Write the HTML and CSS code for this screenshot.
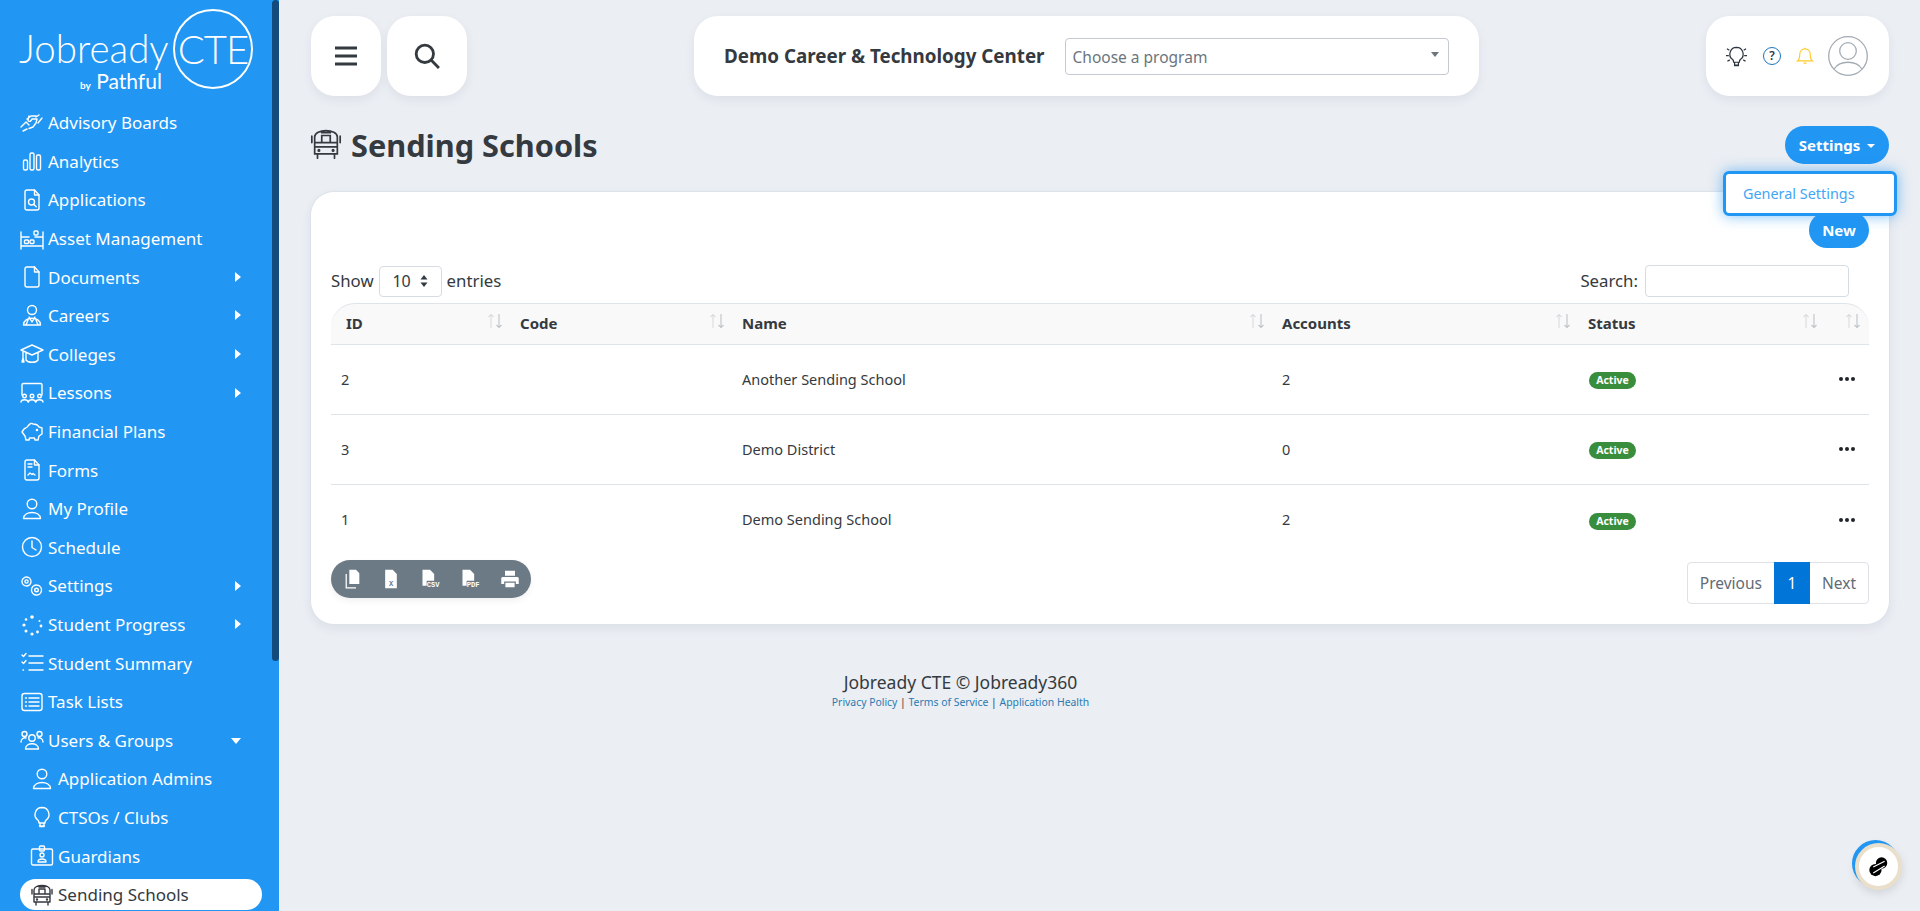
FILE: index.html
```html
<!DOCTYPE html>
<html lang="en">
<head>
  <meta charset="UTF-8">
  <meta name="viewport" content="width=device-width, initial-scale=1.0">
  <title>Sending Schools</title>
  <link rel="stylesheet" href="styles.css">
</head>
<body>
  <svg class="sprite" xmlns="http://www.w3.org/2000/svg">
    <symbol id="i-hands" viewBox="0 0 24 24"><path d="M1 16l5-5M7 8l4-3 5 0M9 5l-1 4c-.3 1.500 2 2 3 .5l1-1.500h5l-1 4-3 4-4 1.500M3 20l4-2M16 6l3-2M18 12l4-5M6 11l3 3"/></symbol>
    <symbol id="i-bars" viewBox="0 0 24 24"><rect x="3.500" y="11" width="4" height="10" rx="1.500"/><rect x="10" y="4" width="4" height="17" rx="1.500"/><rect x="16.500" y="6" width="4" height="15" rx="1.500"/></symbol>
    <symbol id="i-filesearch" viewBox="0 0 24 24"><path d="M14.500 2H7a2 2 0 0 0-2 2v16a2 2 0 0 0 2 2h10a2 2 0 0 0 2-2V7z"/><path d="M14.500 2v5H19"/><circle cx="11.500" cy="14" r="3"/><path d="M13.700 16.200l2.500 2.500"/></symbol>
    <symbol id="i-shelf" viewBox="0 0 24 24"><path d="M1 5v17M23 5v17M1 10h8M15 10h8M1 19h22"/><rect x="14" y="4" width="4" height="4" rx="1"/><rect x="4.500" y="13" width="4" height="3.500" rx="1"/><rect x="10" y="13" width="4" height="3.500" rx="1"/></symbol>
    <symbol id="i-file" viewBox="0 0 24 24"><path d="M14.500 2H7a2 2 0 0 0-2 2v16a2 2 0 0 0 2 2h10a2 2 0 0 0 2-2V7z"/><path d="M14.500 2v5H19"/></symbol>
    <symbol id="i-career" viewBox="0 0 24 24"><circle cx="12" cy="6" r="4.500"/><path d="M3.500 21c0-9 17-9 17 0zM9 13l3 5 3-5M6 21l2-5M18 21l-2-5"/></symbol>
    <symbol id="i-grad" viewBox="0 0 24 24"><path d="M1 8l11-5 11 5-11 5zM6 11v7c2 3 10 3 12 0v-7M3 9v7M2 20l1-4 1 4z"/></symbol>
    <symbol id="i-lesson" viewBox="0 0 24 24"><path d="M2 14V4a1.500 1.500 0 0 1 1.500-1.500h17A1.500 1.500 0 0 1 22 4v10"/><circle cx="4.500" cy="15" r="1.800"/><circle cx="12" cy="15" r="1.800"/><circle cx="19.500" cy="15" r="1.800"/><path d="M1 21c0-3 7-3 7 0M8.500 21c0-3 7-3 7 0M16 21c0-3 7-3 7 0"/></symbol>
    <symbol id="i-piggy" viewBox="0 0 24 24"><path d="M8 6c2-3 4-3 5-2 3 0 5 1 6 3l3 1v6l-3 2-1 4h-3l-.5-2h-5l-.5 2H6l-1-4-3-4 2-3c1-1 3-1 4-3z"/><circle cx="17" cy="10" r=".6"/></symbol>
    <symbol id="i-form" viewBox="0 0 24 24"><path d="M14.500 2H7a2 2 0 0 0-2 2v16a2 2 0 0 0 2 2h10a2 2 0 0 0 2-2V7z"/><path d="M14.500 2v5H19M8 6h4M8 9h4M8 17l2-2 2 1.500 1-1 2 1.500"/></symbol>
    <symbol id="i-user" viewBox="0 0 24 24"><circle cx="12" cy="7" r="4.800"/><path d="M3.500 21.500c0-8 17-8 17 0z"/></symbol>
    <symbol id="i-clock" viewBox="0 0 24 24"><circle cx="12" cy="12" r="9.500"/><path d="M12 6v6.500l4 2.500"/></symbol>
    <symbol id="i-gears" viewBox="0 0 24 24"><circle cx="6.500" cy="7.500" r="4.500" stroke-dasharray="3 1"/><circle cx="6.500" cy="7.500" r="1.600"/><circle cx="16.500" cy="16" r="5" stroke-dasharray="3 1"/><circle cx="16.500" cy="16" r="1.800"/></symbol>
    <symbol id="i-dots" viewBox="0 0 24 24"><g class="solid"><circle cx="12" cy="4" r="1.800"/><circle cx="19.500" cy="8" r="1"/><circle cx="21" cy="13" r="1.400"/><circle cx="17.500" cy="19" r="1.400"/><circle cx="12" cy="21" r="1.600"/><circle cx="6" cy="18" r="1.500"/><circle cx="4" cy="12" r="1.600"/><circle cx="6" cy="6.500" r="1.300"/></g></symbol>
    <symbol id="i-check" viewBox="0 0 24 24"><path d="M9 5h14M9 12h14M9 19h14M2 4l1.500 1.500L6 2.500M2 11l1.500 1.500L6 9.500M3 19h.5"/></symbol>
    <symbol id="i-list" viewBox="0 0 24 24"><rect x="2" y="3.500" width="20" height="17" rx="2.500"/><path d="M5.500 8h1M9 8h10M5.500 12h1M9 12h10M5.500 16h1M9 16h10"/></symbol>
    <symbol id="i-users" viewBox="0 0 24 24"><circle cx="12" cy="10" r="3.200"/><circle cx="4.500" cy="6" r="2.500"/><circle cx="19.500" cy="6" r="2.500"/><path d="M5.500 21c0-7 13-7 13 0zM1 14c0-3 3-5 5-4M23 14c0-3-3-5-5-4"/></symbol>
    <symbol id="i-bulb" viewBox="0 0 24 24"><path d="M12 2.500a7 7 0 0 0-4 12.700c.8.7 1 1.500 1 2.800h6c0-1.300.2-2.100 1-2.800A7 7 0 0 0 12 2.500zM9.500 21h5M10 18v3.500h4V18"/></symbol>
    <symbol id="i-badge" viewBox="0 0 24 24"><rect x="1.500" y="5" width="21" height="16" rx="1.500"/><rect x="9.500" y="2" width="5" height="5" rx="1"/><circle cx="12" cy="11" r="2"/><path d="M8 18c0-4 8-4 8 0z"/></symbol>
    <symbol id="i-bus" viewBox="0 0 24 24"><path d="M4 19V7c0-6 16-6 16 0v12zM4 11h16M9 11V6h6v5M9 4h6M6 19v3M18 19v3M4 14h16M2 6.500V11M22 6.500V11"/><circle cx="7" cy="16.500" r=".5"/><circle cx="17" cy="16.500" r=".5"/></symbol>
    <symbol id="i-sort" viewBox="0 0 16 16"><path class="sort-up" d="M4 15V1.500M1.500 4L4 1.500 6.500 4"/><path class="sort-down" d="M12 1v13.500M9.500 12l2.500 2.500 2.500-2.500"/></symbol>
  </svg>

  <div class="layout">
    <aside class="sidebar">
      <div class="scroll-thumb"></div>
      <div class="logo">
        <div class="logo-left">
          <span class="logo-word">Jobready</span>
          <span class="logo-by"><small>by</small> Pathful</span>
        </div>
        <div class="logo-circle">CTE</div>
      </div>
      <nav class="side-nav">
        <a class="nav-item"><svg class="ico"><use href="#i-hands"/></svg>Advisory Boards</a>
        <a class="nav-item"><svg class="ico"><use href="#i-bars"/></svg>Analytics</a>
        <a class="nav-item"><svg class="ico"><use href="#i-filesearch"/></svg>Applications</a>
        <a class="nav-item"><svg class="ico"><use href="#i-shelf"/></svg>Asset Management</a>
        <a class="nav-item has-sub"><svg class="ico"><use href="#i-file"/></svg>Documents</a>
        <a class="nav-item has-sub"><svg class="ico"><use href="#i-career"/></svg>Careers</a>
        <a class="nav-item has-sub"><svg class="ico"><use href="#i-grad"/></svg>Colleges</a>
        <a class="nav-item has-sub"><svg class="ico"><use href="#i-lesson"/></svg>Lessons</a>
        <a class="nav-item"><svg class="ico"><use href="#i-piggy"/></svg>Financial Plans</a>
        <a class="nav-item"><svg class="ico"><use href="#i-form"/></svg>Forms</a>
        <a class="nav-item"><svg class="ico"><use href="#i-user"/></svg>My Profile</a>
        <a class="nav-item"><svg class="ico"><use href="#i-clock"/></svg>Schedule</a>
        <a class="nav-item has-sub"><svg class="ico"><use href="#i-gears"/></svg>Settings</a>
        <a class="nav-item has-sub"><svg class="ico"><use href="#i-dots"/></svg>Student Progress</a>
        <a class="nav-item"><svg class="ico"><use href="#i-check"/></svg>Student Summary</a>
        <a class="nav-item"><svg class="ico"><use href="#i-list"/></svg>Task Lists</a>
        <a class="nav-item has-sub open"><svg class="ico"><use href="#i-users"/></svg>Users &amp; Groups</a>
        <a class="nav-item sub"><svg class="ico"><use href="#i-user"/></svg>Application Admins</a>
        <a class="nav-item sub"><svg class="ico"><use href="#i-bulb"/></svg>CTSOs / Clubs</a>
        <a class="nav-item sub"><svg class="ico"><use href="#i-badge"/></svg>Guardians</a>
        <a class="nav-item sub active"><svg class="ico"><use href="#i-bus"/></svg>Sending Schools</a>
      </nav>
    </aside>

    <main class="content">
      <header class="topbar">
        <div class="top-group">
          <button class="top-btn">
            <svg class="top-ico" viewBox="0 0 24 24"><path d="M1 4h22M1 12h22M1 20h22" class="thick"/></svg>
          </button>
          <button class="top-btn">
            <svg class="top-ico search-ico" viewBox="0 0 24 24"><circle cx="10" cy="10" r="8"/><path d="M16 16l7 7"/></svg>
          </button>
        </div>
        <div class="org-card">
          <span class="org-name">Demo Career &amp; Technology Center</span>
          <div class="program-select">Choose a program<span class="caret-grey"></span></div>
        </div>
        <div class="user-card">
          <svg class="bulb" viewBox="0 0 24 24"><use href="#i-bulb"/><path d="M2 4l2.500 1.500M1 11h3M2.500 17l2.500-1.500M22 4l-2.500 1.500M23 11h-3M21.500 17L19 15.500"/></svg>
          <span class="help">?</span>
          <svg class="bell" viewBox="0 0 24 24"><path d="M12 2.500a7 7 0 0 0-7 7c0 6-1 7.500-3 9h20c-2-1.500-3-3-3-9a7 7 0 0 0-7-7zM10 21.500h4M12 1v1.500"/></svg>
          <svg class="avatar" viewBox="0 0 40 40"><circle cx="20" cy="20" r="19.300"/><circle cx="20" cy="15" r="8.300"/><path d="M6 33c6-9 22-9 28 0"/></svg>
        </div>
      </header>

      <div class="title-row">
        <h1 class="page-title"><svg class="title-ico"><use href="#i-bus"/></svg>Sending Schools</h1>
        <button class="pill-btn settings-btn">Settings<span class="caret-white"></span></button>
        <div class="drop-menu"><a>General Settings</a></div>
      </div>

      <section class="card">
        <div class="card-actions"><button class="pill-btn new-btn">New</button></div>
        <div class="table-tools">
          <div class="show-entries">Show <div class="len-select">10<svg viewBox="0 0 8 12"><path d="M4 0l3.500 4.500h-7zM4 12L.5 7.500h7z"/></svg></div> entries</div>
          <label class="search-box">Search: <input type="text"></label>
        </div>
        <table class="data-table">
          <colgroup>
            <col class="c-id"><col class="c-code"><col class="c-name"><col class="c-acc"><col class="c-status"><col class="c-act">
          </colgroup>
          <thead>
            <tr>
              <th><div class="th-in">ID<svg class="sort"><use href="#i-sort"/></svg></div></th>
              <th><div class="th-in">Code<svg class="sort"><use href="#i-sort"/></svg></div></th>
              <th><div class="th-in">Name<svg class="sort"><use href="#i-sort"/></svg></div></th>
              <th><div class="th-in">Accounts<svg class="sort"><use href="#i-sort"/></svg></div></th>
              <th><div class="th-in">Status<svg class="sort"><use href="#i-sort"/></svg></div></th>
              <th><div class="th-in"><span></span><svg class="sort"><use href="#i-sort"/></svg></div></th>
            </tr>
          </thead>
          <tbody>
            <tr>
              <td>2</td><td></td><td>Another Sending School</td><td>2</td>
              <td><span class="badge">Active</span></td><td class="dots-cell"><span class="dots"><i></i><i></i><i></i></span></td>
            </tr>
            <tr>
              <td>3</td><td></td><td>Demo District</td><td>0</td>
              <td><span class="badge">Active</span></td><td class="dots-cell"><span class="dots"><i></i><i></i><i></i></span></td>
            </tr>
            <tr>
              <td>1</td><td></td><td>Demo Sending School</td><td>2</td>
              <td><span class="badge">Active</span></td><td class="dots-cell"><span class="dots"><i></i><i></i><i></i></span></td>
            </tr>
          </tbody>
        </table>
        <div class="table-foot">
          <div class="export-group">
            <button>
              <svg viewBox="0 0 24 24"><path class="solid" d="M10 1h8l4 4v13H10zM7 6v16h11v1.500H5.500V6z"/></svg>
            </button>
            <button>
              <svg viewBox="0 0 24 24"><path class="solid" d="M5 1h9l5 5v17H5z"/><text x="12" y="20" class="file-tag">X</text></svg>
            </button>
            <button>
              <svg viewBox="0 0 24 24"><path class="solid" d="M3 1h9l5 5v8H8v6H3z"/><text x="8" y="22" class="file-tag on-dark">CSV</text></svg>
            </button>
            <button>
              <svg viewBox="0 0 24 24"><path class="solid" d="M3 1h9l5 5v8H8v6H3z"/><text x="8" y="22" class="file-tag on-dark">PDF</text></svg>
            </button>
            <button>
              <svg viewBox="0 0 24 24"><path class="solid" d="M6 2h12v6H6zM3 9.500h18a2 2 0 0 1 1.500 2V18H19v-3H5v3H1.500v-6.500a2 2 0 0 1 1.500-2zM6.500 16.500h11V22h-11z"/></svg>
            </button>
          </div>
          <div class="pager">
            <a>Previous</a><a class="current">1</a><a>Next</a>
          </div>
        </div>
      </section>

      <footer class="page-foot">
        <div class="foot-main">Jobready CTE © Jobready360</div>
        <div class="foot-links"><a>Privacy Policy</a> | <a>Terms of Service</a> | <a>Application Health</a></div>
      </footer>
    </main>
  </div>

  <div class="chat-widget">
    <svg viewBox="0 0 24 24"><circle cx="15.500" cy="8" r="6.500"/><circle cx="8.500" cy="16" r="7"/><path class="slash" d="M6 12.500L19 6M6 19.500l13-8"/></svg>
  </div>
</body>
</html>
```
FILE: styles.css
```css
* {
  box-sizing: border-box;
}

html, body {
  margin: 0;
  height: 100%;
  overflow: hidden;
}

body {
  background: #ebeef3;
  color: #343a40;
  font-family: "Noto Sans", "Open Sans", sans-serif;
  font-size: 15px;
}

.sprite {
  display: none;
}

.layout {
  display: flex;
  height: 911px;
}

/* sidebar */
.sidebar {
  width: 279px;
  flex: none;
  background: #2196f3;
  color: #fff;
  position: relative;
  overflow: hidden;
}

.scroll-thumb {
  position: absolute;
  top: 0;
  right: 0;
  width: 7px;
  height: 661px;
  background: #134b7d;
  border-radius: 4px;
}

.logo {
  display: flex;
  height: 103.500px;
  padding: 9px 0 0 19px;
}

.logo-left {
  width: 154px;
  display: flex;
  flex-direction: column;
  padding-top: 19px;
}

.logo-word {
  font-family: "Lato", sans-serif;
  font-weight: 300;
  font-size: 38.500px;
  line-height: 40px;
}

.logo-by {
  font-family: "Lato", sans-serif;
  font-size: 21px;
  line-height: 20px;
  margin: 3px 0 0 61px;
  white-space: nowrap;
}

.logo-by small {
  font-size: 10px;
  font-weight: 700;
}

.logo-circle {
  width: 80px;
  height: 80px;
  border: 2.500px solid #fff;
  border-radius: 50%;
  display: flex;
  align-items: center;
  justify-content: center;
  font-family: "Lato", sans-serif;
  font-weight: 300;
  font-size: 40px;
  letter-spacing: -1px;
}

.nav-item {
  display: flex;
  align-items: center;
  height: 38.600px;
  padding-left: 20px;
  font-size: 17px;
  color: #fff;
  position: relative;
  white-space: nowrap;
}

.ico {
  width: 24px;
  height: 24px;
  margin-right: 4px;
  flex: none;
  fill: none;
  stroke: currentColor;
  stroke-width: 1.400;
  stroke-linecap: round;
  stroke-linejoin: round;
}

.solid {
  fill: currentColor;
  stroke: none;
}

.has-sub::after {
  content: "";
  position: absolute;
  left: 235px;
  top: 14px;
  border-left: 6px solid #fff;
  border-top: 5px solid transparent;
  border-bottom: 5px solid transparent;
}

.has-sub.open::after {
  left: 231px;
  top: 17px;
  border-top: 6px solid #fff;
  border-left: 5px solid transparent;
  border-right: 5px solid transparent;
  border-bottom: 0;
}

.sub {
  padding-left: 30px;
}

.sub.active {
  color: #343a40;
  height: 31px;
  margin: 4px 17px 0 20px;
  padding-left: 10px;
  background: #fff;
  border-radius: 16px;
}

/* main */
.content {
  flex: 1;
  min-width: 0;
  padding: 16px 31px 0 32px;
  position: relative;
}

.topbar {
  display: flex;
  justify-content: space-between;
  height: 80px;
}

.top-group {
  display: flex;
  gap: 6px;
}

.top-btn, .org-card, .user-card {
  background: #fff;
  border: 0;
  border-radius: 24px;
  box-shadow: 0 4px 10px rgba(60, 80, 110, 0.08);
}

.top-btn {
  width: 80px;
  padding: 0;
  display: flex;
  align-items: center;
  justify-content: center;
}

.top-btn:first-child {
  width: 70px;
}

.top-ico {
  width: 24px;
  height: 24px;
  fill: none;
  stroke: #343a40;
  stroke-width: 2.600;
}

.top-ico .thick {
  stroke-width: 3;
}

.search-ico {
  width: 26px;
  height: 26px;
}

.org-card {
  width: 785px;
  display: flex;
  align-items: center;
  padding: 0 30px;
}

.org-name {
  font-weight: 700;
  font-size: 18.800px;
  margin-right: 20px;
  white-space: nowrap;
}

.program-select {
  flex: 1;
  height: 37px;
  border: 1px solid #c4cad1;
  border-radius: 4px;
  display: flex;
  align-items: center;
  justify-content: space-between;
  padding: 1px 9px 0 7px;
  font-size: 15.500px;
  color: #6c757d;
}

.caret-grey {
  border-top: 5px solid #6c757d;
  border-left: 4px solid transparent;
  border-right: 4px solid transparent;
  margin-top: -4px;
}

.user-card {
  width: 183px;
  display: flex;
  align-items: center;
  padding-left: 19px;
}

.bulb {
  width: 23px;
  height: 23px;
  fill: none;
  stroke: #2d3540;
  stroke-width: 1.300;
  margin-right: 15px;
}

.help {
  width: 18px;
  height: 18px;
  border: 1.500px solid #1976bd;
  border-radius: 50%;
  color: #2d3540;
  font-size: 12px;
  font-weight: 600;
  line-height: 15px;
  text-align: center;
  margin-right: 15px;
}

.bell {
  width: 18px;
  height: 20px;
  fill: none;
  stroke: #ffca28;
  stroke-width: 1.500;
  margin-right: 14px;
}

.avatar {
  width: 40px;
  height: 40px;
  fill: none;
  stroke: #a3abb3;
  stroke-width: 1.300;
}

.title-row {
  display: flex;
  justify-content: space-between;
  align-items: center;
  height: 38px;
  margin-top: 30px;
  position: relative;
  z-index: 2;
}

.page-title {
  margin: 0;
  display: flex;
  align-items: center;
  font-size: 30.700px;
  font-weight: 700;
  color: #343a40;
}

.title-ico {
  width: 34px;
  height: 34px;
  margin: -2px 8px 0 -2px;
  fill: none;
  stroke: #343a40;
  stroke-width: 1.200;
  stroke-linecap: round;
}

.pill-btn {
  background: #2196f3;
  color: #fff;
  border: 0;
  border-radius: 19px;
  font-family: inherit;
  font-weight: 700;
  font-size: 15px;
}

.settings-btn {
  width: 104px;
  height: 38px;
  display: flex;
  align-items: center;
  justify-content: center;
  gap: 7px;
}

.caret-white {
  border-top: 4px solid #fff;
  border-left: 4px solid transparent;
  border-right: 4px solid transparent;
  margin-top: 2px;
}

.drop-menu {
  position: absolute;
  top: 45px;
  right: -8px;
  width: 174px;
  height: 45px;
  background: #fff;
  border: 3px solid #2196f3;
  border-radius: 6px;
  box-shadow: 0 0 14px rgba(33, 150, 243, 0.6);
  display: flex;
  align-items: center;
  padding-left: 17px;
  color: #42a5f5;
  font-size: 14.400px;
}

.card {
  background: #fff;
  border: 1px solid #dde3ea;
  border-radius: 24px;
  box-shadow: 0 4px 10px rgba(60, 80, 110, 0.08);
  margin: 27px -1px 0;
  height: 434px;
  padding: 20px 20px 0;
}

.card-actions {
  display: flex;
  justify-content: flex-end;
  height: 36px;
}

.new-btn {
  width: 60px;
  height: 36px;
}

.table-tools {
  display: flex;
  justify-content: space-between;
  align-items: center;
  margin-top: 17px;
  height: 32px;
  font-size: 16.800px;
  line-height: 1;
}

.show-entries {
  display: flex;
  align-items: center;
  gap: 5px;
}

.len-select {
  width: 63px;
  height: 31px;
  border: 1px solid #d6dce3;
  border-radius: 4px;
  display: flex;
  align-items: center;
  justify-content: center;
  gap: 9px;
  font-size: 16px;
}

.len-select svg {
  width: 8px;
  height: 12px;
  fill: #343a40;
}

.search-box {
  display: flex;
  align-items: center;
  gap: 7px;
  margin-right: 20px;
}

.search-box input {
  width: 204px;
  height: 32px;
  border: 1px solid #d6dce3;
  border-radius: 4px;
  outline: 0;
}

.data-table {
  width: 1538px;
  table-layout: fixed;
  border-collapse: separate;
  border-spacing: 0;
  margin-top: 6px;
}

.c-id { width: 179px; }
.c-code { width: 222px; }
.c-name { width: 540px; }
.c-acc { width: 306px; }
.c-status { width: 247px; }
.c-act { width: 44px; }

.data-table th {
  height: 42px;
  padding: 0 7px 2px 10px;
  background: #f9f9f9;
  border-top: 1px solid #dee4ea;
  border-bottom: 1px solid #dee4ea;
  font-size: 15px;
  font-weight: 700;
  text-align: left;
}

.data-table th:first-child {
  border-top-left-radius: 24px;
  padding-left: 15px;
}

.data-table th:last-child {
  border-top-right-radius: 24px;
  padding-right: 8px;
  padding-left: 0;
}

.th-in {
  display: flex;
  justify-content: space-between;
  align-items: center;
}

.sort {
  width: 16px;
  height: 16px;
  margin-top: -4px;
  fill: none;
  stroke-width: 1.100;
}

.sort-up {
  stroke: #d9dcdf;
}

.sort-down {
  stroke: #bfc3c7;
}

.data-table td {
  height: 70px;
  padding: 0 10px 2px;
  border-bottom: 1px solid #dee4ea;
  font-size: 14.500px;
}

.data-table tr:last-child td {
  border-bottom: 0;
}

.badge {
  display: inline-block;
  width: 47px;
  height: 17px;
  margin: 3px 0 0 1px;
  background: #388e3c;
  border-radius: 9px;
  color: #fff;
  font-size: 10.500px;
  font-weight: 700;
  line-height: 17px;
  text-align: center;
}

.dots-cell {
  text-align: right;
}

.dots {
  display: inline-flex;
  gap: 2px;
  margin: 0 4px 3px 0;
  vertical-align: middle;
}

.dots i {
  width: 4px;
  height: 4px;
  background: #212529;
  border-radius: 50%;
}

.table-foot {
  display: flex;
  justify-content: space-between;
  align-items: flex-start;
  margin-top: 5px;
}

.export-group {
  width: 200px;
  height: 38px;
  background: #6c7a86;
  border-radius: 19px;
  display: flex;
  align-items: center;
  padding-right: 1px;
  box-shadow: 0 3px 6px rgba(0, 0, 0, 0.06);
}

.export-group button {
  flex: 1;
  height: 38px;
  background: none;
  border: 0;
  padding: 0;
  color: #fff;
}

.export-group svg {
  width: 20px;
  height: 20px;
  display: block;
  margin: auto;
}

.file-tag {
  font-family: "Liberation Mono", monospace;
  font-size: 8.500px;
  font-weight: 700;
  fill: #6c7a86;
  text-anchor: middle;
}

.file-tag.on-dark {
  fill: #fff;
  text-anchor: start;
}

.pager {
  display: flex;
  height: 42px;
  margin-top: 2px;
  border: 1px solid #dee2e6;
  border-radius: 4px;
  color: #5f6b76;
  font-size: 15.500px;
  line-height: 40px;
}

.pager a {
  padding: 0 12px;
}

.pager .current {
  width: 36px;
  margin: -1px 0;
  padding: 0;
  line-height: 42px;
  background: #0275d8;
  color: #fff;
  text-align: center;
}

.page-foot {
  margin-top: 45px;
  padding-right: 279px;
  text-align: center;
}

.foot-main {
  font-size: 17.500px;
  line-height: 24px;
  color: #343a40;
}

.foot-links {
  font-size: 10.400px;
  line-height: 16px;
  color: #343a40;
}

.foot-links a {
  color: #2a7ab0;
}

.chat-widget {
  position: fixed;
  left: 1855px;
  top: 843px;
  width: 47px;
  height: 47px;
  background: #fff;
  border: 4px solid #eadfca;
  border-radius: 50%;
  box-shadow: -3px -3px 0 0 #2196f3, 0 3px 10px rgba(0, 0, 0, 0.12);
  display: flex;
  align-items: center;
  justify-content: center;
}

.chat-widget svg {
  width: 21px;
  height: 21px;
  fill: #000;
}

.chat-widget .slash {
  fill: none;
  stroke: #fff;
  stroke-width: 1.300;
}
```
